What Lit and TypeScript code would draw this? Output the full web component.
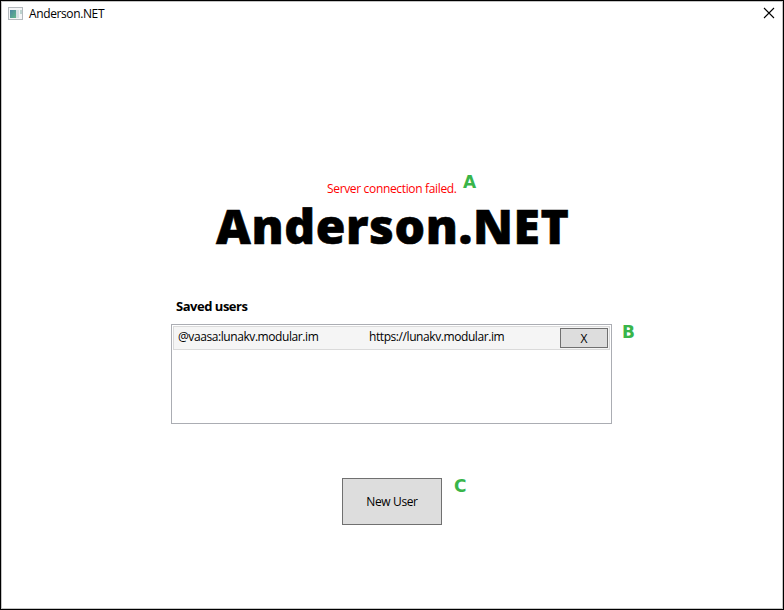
import { LitElement, html, css } from "lit";
import { customElement, state } from "lit/decorators.js";

interface SavedUser {
  id: string;
  server: string;
}

@customElement("window-titlebar")
class WindowTitlebar extends LitElement {
  static styles = css`
    :host { display: flex; height: 26px; align-items: center; justify-content: space-between; }
    .brand { display: flex; align-items: center; padding-left: 7px; }
    .name { margin-left: 5px; font-size: 12px; line-height: 16px; letter-spacing: -0.38px; color: #000; }
    .close { display: block; margin: -2px 8px 0 0; }
  `;
  render() {
    return html`
      <div class="brand">
        <svg width="16" height="14" viewBox="0 0 16 14" shape-rendering="crispEdges">
          <defs>
            <linearGradient id="g" x1="0" y1="0" x2="1" y2="1">
              <stop offset="0" stop-color="#4b86a3" />
              <stop offset="1" stop-color="#63b88a" />
            </linearGradient>
          </defs>
          <rect x="0.5" y="0.5" width="14" height="12" fill="#f4f5f6" stroke="#b4b9bd" />
          <rect x="2" y="3" width="6" height="8" fill="url(#g)" />
          <rect x="8" y="3" width="3" height="8" fill="#d5e0e4" />
          <rect x="12" y="3" width="2" height="4" fill="#bdd3ce" />
        </svg>
        <span class="name">Anderson.NET</span>
      </div>
      <svg class="close" width="12" height="12" viewBox="0 0 12 12">
        <path d="M1 1L11 11M11 1L1 11" stroke="#000" stroke-width="1.1" fill="none" />
      </svg>
    `;
  }
}

@customElement("app-root")
export class AppRoot extends LitElement {
  @state() private users: SavedUser[] = [
    { id: "@vaasa:lunakv.modular.im", server: "https://lunakv.modular.im" },
  ];

  static styles = css`
    :host {
      display: flex; flex-direction: column; box-sizing: border-box;
      width: 784px; height: 610px; border: 1px solid #000; background: #fff;
      box-shadow: inset 0 0 0 1px #c4c4c4;
      font-family: "Open Sans", "Noto Sans", sans-serif; font-size: 12px; line-height: 16px; color: #000;
    }
    * { box-sizing: border-box; }
    main { display: flex; flex-direction: column; padding-top: 154px; padding-left: 170px; }
    .error { position: relative; align-self: flex-start; margin-left: 156px; color: #f00; white-space: nowrap; letter-spacing: -0.34px; }
    h1 {
      margin: 1px 0 0 45px; height: 56px; font-size: 48px; line-height: 56px; font-weight: 800;
      white-space: nowrap; letter-spacing: 0.6px; -webkit-text-stroke: 0.6px #000;
    }
    h2 { margin: 43px 0 0 5px; font-size: 13px; line-height: 18px; font-weight: 700; letter-spacing: -0.48px; }
    .list { position: relative; margin-top: 9px; width: 441px; height: 100px; padding: 1px; border: 1px solid #abadb3; }
    .row {
      display: grid; grid-template-columns: 191px 191px 48px; align-items: start; height: 24px;
      padding: 1px 1px 0 4px; border: 1px solid #dadada; background: #f5f5f5; white-space: nowrap;
    }
    .cell { line-height: 17px; letter-spacing: -0.42px; }
    button {
      display: flex; align-items: center; justify-content: center; padding: 0; margin: 0;
      border: 1px solid #707070; border-radius: 0; background: #ddd; color: #000; font: inherit;
    }
    .remove { width: 48px; height: 20px; padding-top: 2px; }
    .create-wrap { position: relative; align-self: flex-start; margin: 54px 0 0 171px; }
    .create { width: 100px; height: 47px; letter-spacing: -0.38px; }
    .mark { position: absolute; font: 700 17px/20px "DejaVu Sans", sans-serif; letter-spacing: 0; color: #39b54a; }
    .mark-a { left: 136px; top: -9px; }
    .mark-b { left: 450px; top: -3px; }
    .mark-c { left: 112px; top: -2px; }
  `;

  private remove(user: SavedUser) {
    this.users = this.users.filter((u) => u !== user);
  }

  render() {
    return html`
      <window-titlebar></window-titlebar>
      <main>
        <div class="error">Server connection failed.<span class="mark mark-a">A</span></div>
        <h1>Anderson.NET</h1>
        <h2>Saved users</h2>
        <div class="list">
          ${this.users.map(
            (u) => html`<div class="row">
              <span class="cell">${u.id}</span>
              <span class="cell">${u.server}</span>
              <button class="remove" @click=${() => this.remove(u)}>X</button>
            </div>`
          )}
          <span class="mark mark-b">B</span>
        </div>
        <div class="create-wrap">
          <button class="create">New User</button>
          <span class="mark mark-c">C</span>
        </div>
      </main>
    `;
  }
}
